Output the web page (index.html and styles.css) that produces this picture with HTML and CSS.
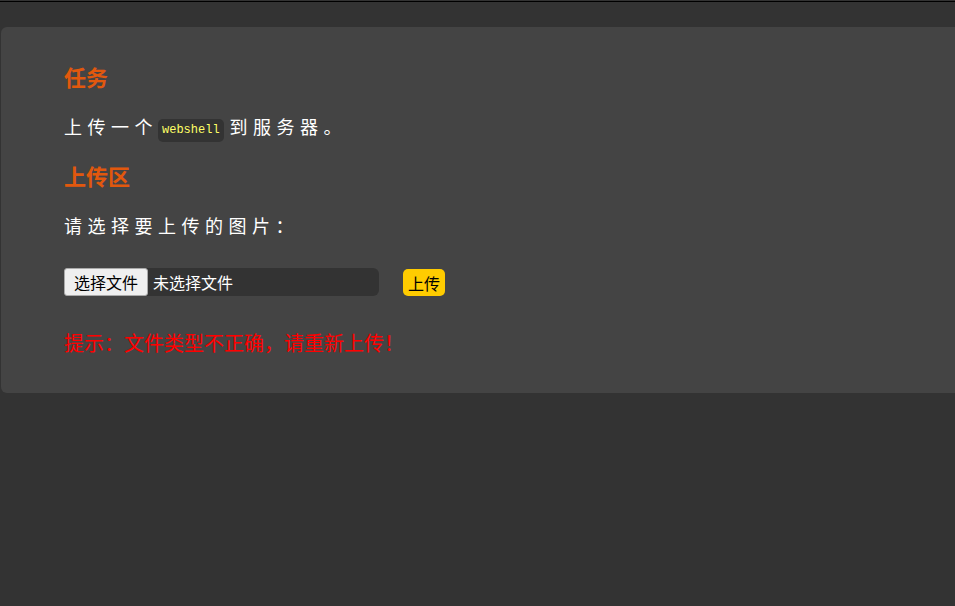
FILE: index.html
```html
<!DOCTYPE html>
<html lang="zh-CN">
  <head>
    <meta charset="UTF-8" />
    <meta name="viewport" content="width=device-width, initial-scale=1.0" />
    <title>上传</title>
    <link rel="stylesheet" href="styles.css">
  </head>
  <body>
    <div class="topline"></div>
    <div class="card">
      <!-- 任务 -->
      <h2 class="title">任务</h2>
      <p class="desc">上传一个<code>webshell</code>到服务器。</p>

      <!-- 上传区 -->
      <h2 class="title">上传区</h2>
      <p class="desc">请选择要上传的图片：</p>
      <form class="upload-form" onsubmit="return false;">
        <label class="file">
          <input type="file" name="upload_file" />
          <span class="file-btn">选择文件</span>
          <span class="file-name">未选择文件</span>
        </label>
        <button type="submit" class="submit">上传</button>
      </form>
      <p class="msg">提示：文件类型不正确，请重新上传！</p>
    </div>
  </body>
</html>
```

FILE: styles.css
```css
* {
  padding: 0;
  margin: 0;
  box-sizing: border-box;
}
html {
  background-color: #333;
}
body {
  padding-top: 1px;
  font-family: "Noto Sans CJK SC", "Noto Sans", sans-serif;
  color: #fff;
}
.topline {
  height: 1px;
  background-color: #000;
}

.card {
  margin: 25px 0 0 1px;
  padding: 34px 0 35px 63px;
  background-color: #444;
  border-radius: 6px 0 0 6px;
}

.title {
  font-size: 22px;
  line-height: 30px;
  font-weight: bold;
  color: #e2580d;
}
.desc {
  margin: 20px 0 18px;
  font-size: 18px;
  line-height: 30px;
  letter-spacing: 5.5px;
}
.desc + .upload-form {
  margin-top: 27px;
}
.desc code {
  display: inline-block;
  margin: 0 6px 0 0;
  padding: 0 4px;
  height: 23px;
  line-height: 23px;
  vertical-align: 1px;
  font-family: "Liberation Mono", "DejaVu Sans Mono", monospace;
  font-size: 12px;
  letter-spacing: 0;
  color: #ffff66;
  background-color: #333;
  border-radius: 5px;
}

.upload-form {
  display: flex;
  align-items: center;
  gap: 24px;
}
.file {
  display: flex;
  align-items: stretch;
  width: 315px;
  height: 28px;
  background-color: #333;
  border-radius: 6px;
  cursor: pointer;
  font-size: 16px;
}
.file input {
  display: none;
}
.file-btn {
  display: flex;
  align-items: center;
  padding: 0 9px;
  color: #000;
  background-color: #efefef;
  border: 1px solid #aaa;
  border-radius: 3px;
}
.file-name {
  display: flex;
  align-items: center;
  padding-left: 5px;
  color: #fff;
}
.submit {
  height: 27px;
  padding: 0 5px;
  margin-top: 2px;
  font-family: inherit;
  font-size: 16px;
  color: #000;
  background-color: #ffcc00;
  border: none;
  border-radius: 5px;
  cursor: pointer;
}

.msg {
  margin-top: 32px;
  font-size: 20px;
  line-height: 30px;
  color: #f00;
}
```
